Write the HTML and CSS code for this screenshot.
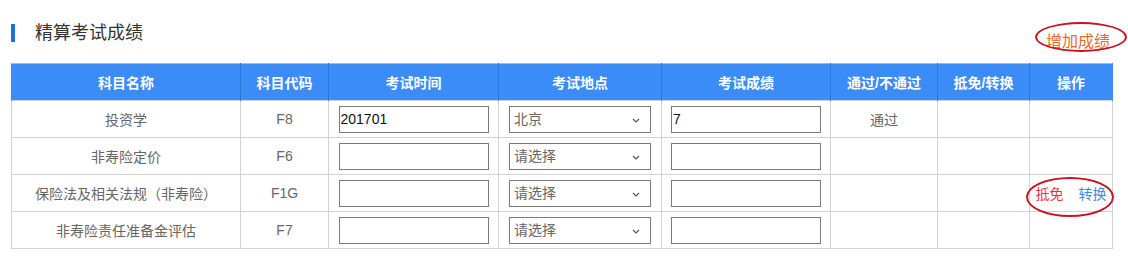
FILE: index.html
```html
<!DOCTYPE html>
<html lang="zh-CN">
	<head>
		<meta charset="utf-8">
		<meta name="viewport" content="width=device-width, initial-scale=1">
		<title>精算考试成绩</title>
		<link rel="stylesheet" href="styles.css">
	</head>
	<body>
		<div class="page">
			<div class="title-bar">
				<h2 class="title">精算考试成绩</h2>
				<a href="#" class="add-score">增加成绩</a>
				<span class="ring ring-add"></span>
			</div>
			<table class="score-table">
				<colgroup>
					<col style="width:229px">
					<col style="width:88px">
					<col style="width:170px">
					<col style="width:163px">
					<col style="width:169px">
					<col style="width:107px">
					<col style="width:92px">
					<col style="width:83px">
				</colgroup>
				<thead>
					<tr>
						<th>科目名称</th>
						<th>科目代码</th>
						<th>考试时间</th>
						<th>考试地点</th>
						<th>考试成绩</th>
						<th>通过/不通过</th>
						<th>抵免/转换</th>
						<th>操作</th>
					</tr>
				</thead>
				<tbody>
					<tr>
						<td>投资学</td>
						<td>F8</td>
						<td><input type="text" class="field" value="201701"></td>
						<td>
							<span class="select-box">
								<select class="field select"><option>北京</option></select>
								<svg class="chevron" width="8" height="5" viewBox="0 0 8 5"><path d="M1 1l3 3 3-3" fill="none" stroke="#555" stroke-width="1.2"/></svg>
							</span>
						</td>
						<td><input type="text" class="field" value="7"></td>
						<td>通过</td>
						<td></td>
						<td></td>
					</tr>
					<tr>
						<td>非寿险定价</td>
						<td>F6</td>
						<td><input type="text" class="field"></td>
						<td>
							<span class="select-box">
								<select class="field select"><option>请选择</option></select>
								<svg class="chevron" width="8" height="5" viewBox="0 0 8 5"><path d="M1 1l3 3 3-3" fill="none" stroke="#555" stroke-width="1.2"/></svg>
							</span>
						</td>
						<td><input type="text" class="field"></td>
						<td></td>
						<td></td>
						<td></td>
					</tr>
					<tr>
						<td>保险法及相关法规（非寿险）</td>
						<td>F1G</td>
						<td><input type="text" class="field"></td>
						<td>
							<span class="select-box">
								<select class="field select"><option>请选择</option></select>
								<svg class="chevron" width="8" height="5" viewBox="0 0 8 5"><path d="M1 1l3 3 3-3" fill="none" stroke="#555" stroke-width="1.2"/></svg>
							</span>
						</td>
						<td><input type="text" class="field"></td>
						<td></td>
						<td></td>
						<td class="ops">
							<a href="#" class="op-credit">抵免</a><a href="#" class="op-transfer">转换</a>
							<span class="ring ring-ops"></span>
						</td>
					</tr>
					<tr>
						<td>非寿险责任准备金评估</td>
						<td>F7</td>
						<td><input type="text" class="field"></td>
						<td>
							<span class="select-box">
								<select class="field select"><option>请选择</option></select>
								<svg class="chevron" width="8" height="5" viewBox="0 0 8 5"><path d="M1 1l3 3 3-3" fill="none" stroke="#555" stroke-width="1.2"/></svg>
							</span>
						</td>
						<td><input type="text" class="field"></td>
						<td></td>
						<td></td>
						<td></td>
					</tr>
				</tbody>
			</table>
		</div>
	</body>
</html>
```

FILE: styles.css
```css
body {
	margin: 0;
	background: #fff;
	font-family: "Liberation Sans", "Noto Sans CJK SC", sans-serif;
	color: #666;
}
.page {
	padding: 22px 16px 0 11px;
}

/* heading with blue mark on the left */
.title-bar {
	position: relative;
	display: flex;
	align-items: center;
	justify-content: space-between;
	height: 20px;
	margin-bottom: 21px;
}
.title {
	margin: 2px 0 0;
	padding-left: 20px;
	border-left: 4px solid #1a73d9;
	font-size: 18px;
	font-weight: normal;
	line-height: 18px;
	color: #333;
}
.add-score {
	margin: 20px 2px 0 0;
	font-size: 16px;
	line-height: 20px;
	color: #ec6a2c;
	text-decoration: none;
}

/* red hand-drawn rings */
.ring {
	position: absolute;
	border: 2px solid #c8141e;
	border-radius: 50%;
	pointer-events: none;
}
.ring-add {
	right: -15px;
	top: 0;
	width: 88px;
	height: 26px;
}
.ring-ops {
	left: -4px;
	top: 2px;
	width: 84px;
	height: 36px;
}

/* table */
.score-table {
	table-layout: fixed;
	width: 1101px;
	border-collapse: collapse;
	font-size: 14px;
}
.score-table th {
	height: 36px;
	padding: 0;
	background: #3b8cf6;
	color: #fff;
	font-weight: bold;
	border-top: 1px solid #8fbdf5;
	border-left: 1px solid #2a78dc;
	border-right: 1px solid #2a78dc;
}
.score-table th:first-child {
	border-left-color: #3b8cf6;
}
.score-table th:last-child {
	border-right-color: #3b8cf6;
}
.score-table td {
	height: 36px;
	padding: 0;
	text-align: center;
	border: 1px solid #d2d2d2;
	color: #666;
}
.field {
	box-sizing: border-box;
	width: 150px;
	height: 27px;
	margin: 0;
	padding: 0 1px;
	border: 1px solid #7a7a7a;
	font-family: "Liberation Sans", "Noto Sans CJK SC", sans-serif;
	font-size: 14px;
	color: #111;
	background: #fff;
	vertical-align: middle;
	outline: none;
}
.select-box {
	position: relative;
	display: inline-block;
	vertical-align: middle;
}
.select {
	display: block;
	width: 142px;
	padding: 0 4px;
	color: #666;
	-webkit-appearance: none;
	appearance: none;
	border-radius: 0;
}
.chevron {
	position: absolute;
	right: 11px;
	top: 12px;
}
.ops {
	position: relative;
}
.ops a {
	text-decoration: none;
}
.op-credit {
	color: #e5393c;
	margin-right: 15px;
}
.op-transfer {
	color: #3a8be8;
}
```
